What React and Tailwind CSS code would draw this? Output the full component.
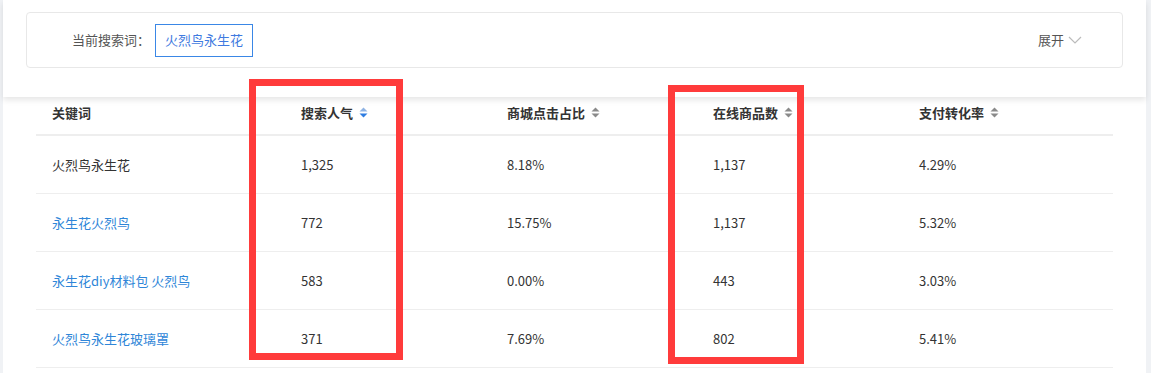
import React from "react";

const FONT = { fontFamily: '"Noto Sans CJK SC", "Noto Sans", sans-serif' };

const COLUMNS = [
  { key: "kw", label: "关键词", width: "w-[249px]" },
  { key: "pop", label: "搜索人气", width: "w-[206px]", sort: "desc" },
  { key: "ctr", label: "商城点击占比", width: "w-[206px]", sort: "none" },
  { key: "goods", label: "在线商品数", width: "w-[206px]", sort: "none" },
  { key: "pay", label: "支付转化率", width: "flex-1", sort: "none" },
];

const ROWS = [
  { kw: "火烈鸟永生花", link: false, pop: "1,325", ctr: "8.18%", goods: "1,137", pay: "4.29%" },
  { kw: "永生花火烈鸟", link: true, pop: "772", ctr: "15.75%", goods: "1,137", pay: "5.32%" },
  { kw: "永生花diy材料包 火烈鸟", link: true, pop: "583", ctr: "0.00%", goods: "443", pay: "3.03%" },
  { kw: "火烈鸟永生花玻璃罩", link: true, pop: "371", ctr: "7.69%", goods: "802", pay: "5.41%" },
];

function SortIcon({ state }) {
  const up = state === "desc" ? "#8fb3e3" : "#8a8a8a";
  const down = state === "desc" ? "#2f7de1" : "#8a8a8a";
  return (
    <svg width="9" height="11" viewBox="0 0 9 11" className="ml-[6px]" aria-hidden="true">
      <path d="M4.5 0.5L8.5 4.6H0.5z" fill={up} />
      <path d="M4.5 10.5L8.5 6.4H0.5z" fill={down} />
    </svg>
  );
}

export default function App() {
  return (
    <div className="relative min-h-screen w-full bg-[#f0f2f5] pl-[3px] text-[13px]" style={FONT}>
      <div className="min-h-screen w-[1143px] bg-white">
        {/* search bar card */}
        <div className="relative z-10 h-[97px] bg-white px-[23px] pt-[12px] shadow-[0_3px_6px_rgba(0,0,0,0.1)]">
          <div className="flex h-[56px] items-center rounded border border-[#e8e8e8] pl-[45px] pr-[40px]">
            <span className="text-[#555]">当前搜索词：</span>
            <span className="ml-[5px] flex h-[33px] items-center border border-[#3a87e6] px-[9px] text-[#3f7ae0]">
              火烈鸟永生花
            </span>
            <div className="ml-auto flex items-center text-[#555]">
              展开
              <svg width="14" height="8" viewBox="0 0 14 8" className="ml-[4px]" aria-hidden="true">
                <path d="M1 1l6 6 6-6" fill="none" stroke="#bbb" strokeWidth="1.2" />
              </svg>
            </div>
          </div>
        </div>

        {/* table */}
        <div className="mx-[33px]">
          <div className="flex h-[39px] items-center border-b-2 border-[#eeeeee] pb-[6px]">
            {COLUMNS.map((c) => (
              <div key={c.key} className={`${c.width} flex items-center pl-[16px] font-semibold text-[#333]`}>
                {c.label}
                {c.sort && <SortIcon state={c.sort} />}
              </div>
            ))}
          </div>
          {ROWS.map((r, i) => (
            <div key={i} className="flex h-[58px] items-center border-b border-[#eeeeee]">
              <div className={`w-[249px] pl-[16px] ${r.link ? "text-[#2f86d8]" : "text-[#333]"}`}>{r.kw}</div>
              <div className="w-[206px] pl-[16px] text-[#333]">{r.pop}</div>
              <div className="w-[206px] pl-[16px] text-[#333]">{r.ctr}</div>
              <div className="w-[206px] pl-[16px] text-[#333]">{r.goods}</div>
              <div className="flex-1 pl-[16px] text-[#333]">{r.pay}</div>
            </div>
          ))}
        </div>
      </div>

      {/* annotation boxes */}
      <div className="absolute left-[249px] top-[79px] z-20 h-[281px] w-[154px] border-[7px] border-[#ff3b3b]" />
      <div className="absolute left-[668px] top-[85px] z-20 h-[279px] w-[136px] border-[7px] border-[#ff3b3b]" />
    </div>
  );
}
